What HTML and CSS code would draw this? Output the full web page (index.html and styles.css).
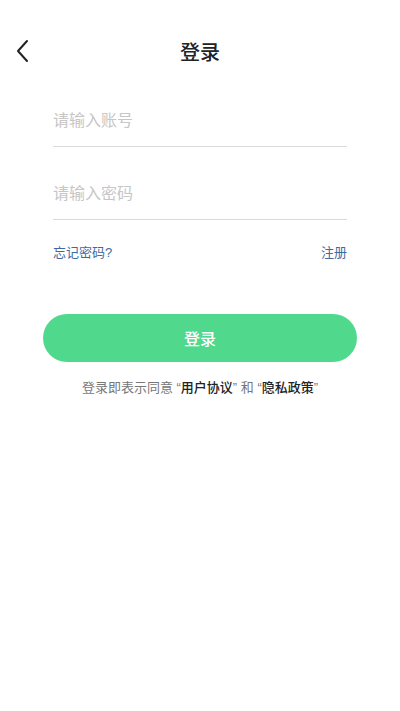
FILE: index.html
```html
<!DOCTYPE html>
<html lang="zh-CN">
<head>
    <meta charset="UTF-8">
    <meta name="viewport" content="width=device-width, initial-scale=1.0">
    <title>登录</title>
    <link rel="stylesheet" href="styles.css">
</head>
<body>
    <div class="page">
        <div class="nav">
            <span class="nav-back">
                <svg width="14" height="24" viewBox="0 0 14 24">
                    <path d="M12 2 L3 12 L12 22" fill="none" stroke="#222" stroke-width="2" stroke-linecap="round" stroke-linejoin="round"/>
                </svg>
            </span>
            <div class="nav-title">登录</div>
        </div>
        <div class="form">
            <div class="field">请输入账号</div>
            <div class="field">请输入密码</div>
            <div class="links">
                <span>忘记密码?</span>
                <span>注册</span>
            </div>
        </div>
        <button class="btn-login">登录</button>
        <p class="agree">登录即表示同意 “<b>用户协议</b>” 和 “<b>隐私政策</b>”</p>
    </div>
</body>
</html>
```

FILE: styles.css
```css
* {
    box-sizing: border-box;
}
body {
    margin: 0;
    background: #fff;
    font-family: "Liberation Sans", "Noto Sans CJK SC", sans-serif;
}
.page {
    width: 400px;
    min-height: 711px;
}
.nav {
    position: relative;
    height: 56px;
    margin-top: 23px;
    display: flex;
    align-items: center;
    justify-content: center;
}
.nav-back {
    position: absolute;
    left: 15px;
    top: 16px;
}
.nav-title {
    font-size: 20px;
    font-weight: 500;
    color: #222;
}
.form {
    padding: 0 53px;
}
.field {
    height: 68px;
    padding-bottom: 15px;
    border-bottom: 1px solid #d9d9d9;
    font-size: 16px;
    color: #c6c6c6;
    display: flex;
    align-items: flex-end;
}
.field + .field {
    margin-top: 5px;
}
.links {
    display: flex;
    justify-content: space-between;
    margin-top: 22px;
    font-size: 13px;
    color: #3e6aa0;
}
.btn-login {
    display: block;
    width: 314px;
    height: 48px;
    margin: 53px auto 0;
    border: none;
    border-radius: 24px;
    background: #50d98c;
    color: #fff;
    font-family: inherit;
    font-size: 16px;
    font-weight: 500;
}
.agree {
    margin: 15px 0 0;
    text-align: center;
    font-size: 13px;
    color: #777;
}
.agree b {
    font-weight: 500;
    color: #222;
}
```
